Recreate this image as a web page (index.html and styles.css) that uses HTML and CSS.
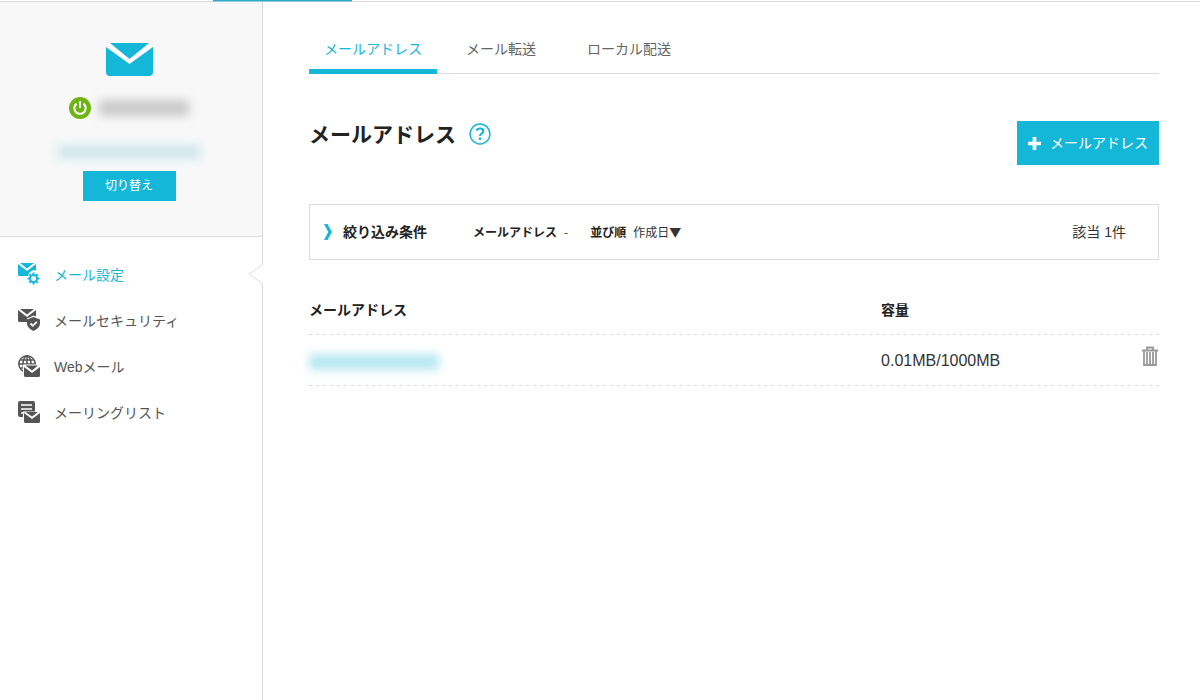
FILE: index.html
```html
<!DOCTYPE html>
<html lang="ja">
<head>
<meta charset="utf-8">
<title>メールアドレス</title>
<link rel="stylesheet" href="styles.css">
</head>
<body>
<header class="topbar"><div class="topbar-active"></div></header>
<div class="layout">
  <aside class="sidebar">
    <div class="account">
      <svg class="account-icon" viewBox="0 0 47 33" aria-hidden="true">
        <path fill="currentColor" d="M4 0h39L23.500 16zM0 4l23.500 17L47 4v25a4 4 0 0 1-4 4H4a4 4 0 0 1-4-4z"/>
        <path fill="none" stroke="#fff" stroke-width="3.400" d="M1.500 1.500 23.500 18.300 45.500 1.500"/>
      </svg>
      <div class="account-name">
        <svg class="power" viewBox="0 0 22 22" aria-hidden="true">
          <circle cx="11" cy="11" r="11" fill="#6cb515"/>
          <path d="M7.600 6.600a5.700 5.700 0 1 0 6.800 0M11 4v7" fill="none" stroke="#fff" stroke-width="2"/>
        </svg>
        <span class="mask mask-name"></span>
      </div>
      <span class="mask mask-plan"></span>
      <button class="switch" type="button">切り替え</button>
    </div>
    <nav class="menu">
      <a class="menu-item current" href="#">
        <svg class="menu-icon" viewBox="0 0 22 22" aria-hidden="true">
          <path fill="currentColor" d="M2 0h14L9 5.500zM0 1l9 7 9-7v6.500a6.500 6.500 0 0 0-8 5.500H1.500A1.500 1.500 0 0 1 0 11.500z"/>
          <circle cx="15.500" cy="15.500" r="3.500" fill="none" stroke="currentColor" stroke-width="2"/>
          <path d="M15.500 9.500v2m0 8v2m-6-6h2m8 0h2m-10.200-4.200 1.400 1.400m5.600 5.600 1.400 1.400m0-8.400-1.400 1.400m-5.600 5.600-1.400 1.400" stroke="currentColor" stroke-width="2"/>
        </svg>
        メール設定
      </a>
      <a class="menu-item" href="#">
        <svg class="menu-icon" viewBox="0 0 22 22" aria-hidden="true">
          <path fill="currentColor" d="M2 0h14L9 5.500zM0 1l9 7 9-7v6.500l-2.500-1L9 9.500V13H1.500A1.500 1.500 0 0 1 0 11.500z"/>
          <path fill="currentColor" d="M15.500 8 22 10.500v4c0 3-2.500 5.500-6.500 7.500-4-2-6.500-4.500-6.500-7.500v-4z"/>
          <path d="m12.500 14.500 2.300 2.300 4-4" fill="none" stroke="#fff" stroke-width="1.800"/>
        </svg>
        メールセキュリティ
      </a>
      <a class="menu-item" href="#">
        <svg class="menu-icon" viewBox="0 0 22 22" aria-hidden="true">
          <g fill="none" stroke="currentColor" stroke-width="1.500">
            <circle cx="9" cy="9" r="8.200"/>
            <ellipse cx="9" cy="9" rx="4" ry="8"/>
            <path d="M9 1v16M1 9h16M2.500 5h13M2.500 13h13"/>
          </g>
          <path fill="#fff" d="M5 9.500h17V22H5z"/>
          <path fill="currentColor" d="M7.500 10.500h12.500L14 15.500zM6 12l8 6 8-6v8.500a1.500 1.500 0 0 1-1.500 1.500h-13A1.500 1.500 0 0 1 6 20.500z"/>
        </svg>
        Webメール
      </a>
      <a class="menu-item" href="#">
        <svg class="menu-icon" viewBox="0 0 22 22" aria-hidden="true">
          <path fill="currentColor" d="M2 0h13a2 2 0 0 1 2 2v14H2a2 2 0 0 1-2-2V2a2 2 0 0 1 2-2z"/>
          <path d="M3 4h11M3 8h11M3 12h3" stroke="#fff" stroke-width="1.600"/>
          <path fill="#fff" d="M5 10.500h17V22H5z"/>
          <path fill="currentColor" d="M7.500 11h12.500L14 15.500zM6 12l8 6 8-6v8.500a1.500 1.500 0 0 1-1.500 1.500h-13A1.500 1.500 0 0 1 6 20.500z"/>
        </svg>
        メーリングリスト
      </a>
      <svg class="notch" viewBox="0 0 15 22" aria-hidden="true">
        <path d="M15 0v1L1 11l14 10v1" fill="#fff" stroke="#dcdcdc"/>
      </svg>
    </nav>
  </aside>
  <main class="content">
    <nav class="tabs">
      <a class="tab active" href="#">メールアドレス</a>
      <a class="tab" href="#">メール転送</a>
      <a class="tab" href="#">ローカル配送</a>
    </nav>
    <div class="title-row">
      <h1 class="title">メールアドレス</h1>
      <button class="help" type="button" aria-label="ヘルプ">
        <svg class="help-icon" viewBox="0 0 22 22" aria-hidden="true">
          <circle cx="11" cy="11" r="9.900" fill="none" stroke="currentColor" stroke-width="1.500"/>
          <path d="M7.500 7.700q.9-2.200 3.500-2.200 3.300 0 3.300 2.600 0 1.500-1.700 2.500-1.600.9-1.600 2.400" fill="none" stroke="currentColor" stroke-width="2.200"/>
          <path d="M9.800 14.500h2.400v2.400H9.800z" fill="currentColor"/>
        </svg>
      </button>
      <button class="add" type="button">
        <svg class="add-icon" viewBox="0 0 14 14" aria-hidden="true"><path d="M7 0v14M0 7h14" stroke="currentColor" stroke-width="4"/></svg>
        メールアドレス
      </button>
    </div>
    <section class="filter">
      <button class="filter-toggle" type="button">
        <svg class="chevron" viewBox="0 0 8 16" aria-hidden="true"><path d="M0 0h3.500L8 8l-4.500 8H0l4.300-8z" fill="#15b7d8"/></svg>
        絞り込み条件
      </button>
      <dl class="terms">
        <div class="term"><dt>メールアドレス</dt><dd>-</dd></div>
        <div class="term"><dt>並び順</dt><dd>作成日▼</dd></div>
      </dl>
      <p class="count">該当 1件</p>
    </section>
    <table class="list">
      <thead>
        <tr><th class="col-address" scope="col">メールアドレス</th><th scope="col">容量</th><td class="col-action"></td></tr>
      </thead>
      <tbody>
        <tr>
          <td><span class="mask mask-address"></span></td>
          <td class="capacity">0.01MB/1000MB</td>
          <td class="col-action">
            <button class="delete" type="button" aria-label="削除">
              <svg class="trash" viewBox="0 0 16 20" aria-hidden="true">
                <path d="M5 3.500V1.500h6v2M0 4.500h16M2 5v14h12V5M5 6v12M8 6v12M11 6v12" fill="none" stroke="currentColor" stroke-width="1.800"/>
              </svg>
            </button>
          </td>
        </tr>
      </tbody>
    </table>
  </main>
</div>
</body>
</html>
```
FILE: styles.css
```css
* { box-sizing: border-box; }

body {
  margin: 0;
  min-height: 100vh;
  display: flex;
  flex-direction: column;
  background: #fff;
  color: #333;
  font: 14px/20px "Liberation Sans", "Noto Sans CJK JP", sans-serif;
}

button {
  padding: 0;
  border: 0;
  background: none;
  color: inherit;
  font: inherit;
  cursor: pointer;
}

a { text-decoration: none; color: inherit; }

svg { display: block; flex: none; }

.topbar {
  height: 2px;
  padding-left: 213px;
  background: linear-gradient(#fff 50%, #dcdcdc 50%);
}

.topbar-active { width: 139px; height: 1px; background: #2fa8c8; box-shadow: 0 1px #8fcede; }

.layout { flex: 1; display: flex; }

.sidebar { width: 263px; flex: none; border-right: 1px solid #dcdcdc; }

.account {
  display: flex;
  flex-direction: column;
  align-items: center;
  padding: 41px 4px 35px 0;
  border-bottom: 1px solid #dcdcdc;
  background: #f8f8f8;
}

.account-icon { width: 47px; height: 33px; color: #15b7d8; }

.account-name {
  display: flex;
  align-items: center;
  gap: 8px;
  margin-top: 21px;
}

.power { width: 22px; height: 22px; }

.mask { display: block; filter: blur(5px); }

.mask-name { width: 90px; height: 16px; background: #cacaca; }

.mask-plan { width: 142px; height: 14px; margin-top: 26px; background: #d0e7ee; }

.mask-address { width: 130px; height: 16px; margin-top: 2px; background: #b8e8f2; }

.switch {
  width: 93px;
  height: 30px;
  margin-top: 12px;
  background: #15b7d8;
  color: #fff;
  font-size: 12px;
}

.menu {
  position: relative;
  display: flex;
  flex-direction: column;
  gap: 22px;
  padding: 26px 18px;
  color: #555;
  line-height: 24px;
}

.menu-item { display: flex; align-items: flex-start; gap: 14px; }

.menu-item.current { color: #15b7d8; }

.menu-icon { width: 22px; height: 22px; }

.notch { position: absolute; top: 26px; right: -1px; width: 15px; height: 22px; }

.content { flex: 1; padding: 24px 41px 24px 46px; }

.tabs { display: flex; border-bottom: 1px solid #dcdcdc; }

.tab { margin: 0 17px 0 12px; padding: 13px 0 10px; color: #666; }

.tab + .tab { margin-left: 34px; }

.tab.active {
  margin: 0 -5px -1px 0;
  padding: 13px 15px 10px;
  border-bottom: 5px solid #15b7d8;
  color: #15b7d8;
}

.title-row { display: flex; align-items: flex-start; margin-top: 47px; }

.title { margin: 0; color: #222; font-size: 21px; line-height: 28px; }

.help { margin: 2px 0 0 13px; color: #15b7d8; }

.help-icon { width: 22px; height: 22px; }

.add {
  display: flex;
  align-items: center;
  gap: 9px;
  height: 44px;
  margin-left: auto;
  padding: 0 11px;
  background: #15b7d8;
  color: #fff;
}

.add-icon { width: 13px; height: 13px; }

.filter {
  display: flex;
  align-items: center;
  margin-top: 39px;
  padding: 17px 32px 17px 14px;
  border: 1px solid #dcdcdc;
}

.filter-toggle {
  display: flex;
  align-items: center;
  gap: 11px;
  color: #222;
  font-weight: 700;
}

.chevron { width: 8px; height: 16px; }

.terms {
  display: flex;
  gap: 22px;
  margin: 0 0 0 46px;
  font-family: "Noto Sans CJK JP", sans-serif;
  font-size: 12px;
}

.term { display: flex; gap: 7px; }

.term dt { font-weight: 700; color: #222; }

.term dd { margin: 0; }

.count { margin: 0 0 0 auto; }

.list { width: 100%; margin-top: 24px; border-collapse: collapse; table-layout: fixed; }

.list th { padding: 0; color: #222; text-align: left; }

.list td { padding: 0; }

.list tr {
  height: 51px;
  background: repeating-linear-gradient(90deg, #dcdcdc 0 3px, transparent 3px 7px) bottom / 100% 1px no-repeat;
}

.col-address { width: 67.3%; }

.col-action { width: 40px; }

.capacity { font-size: 16px; }

.list .col-action { padding: 0 1px 10px 0; }

.delete { display: block; margin-left: auto; color: #999; }

.trash { width: 16px; height: 20px; }
```
